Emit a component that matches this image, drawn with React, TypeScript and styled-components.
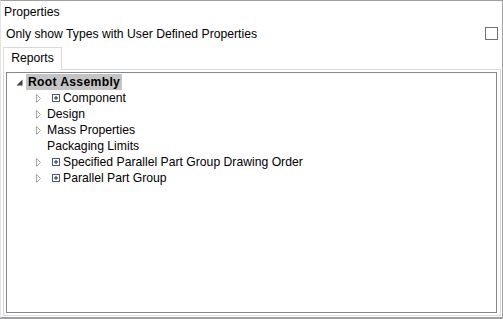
import * as React from 'react';
import styled, { createGlobalStyle } from 'styled-components';

const GlobalStyle = createGlobalStyle`
  html, body {
    margin: 0;
    padding: 0;
    background: #ffffff;
  }
  body {
    font-family: "Liberation Sans", Arial, sans-serif;
    font-size: 12.2px;
    color: #000;
  }
`;

const Frame = styled.div`
  width: 503px;
  height: 319px;
  box-sizing: border-box;
  display: flex;
  flex-direction: column;
  border-top: 1px solid #a0a0a0;
  border-left: 1px solid #e3e3e3;
  border-right: 1px solid #a0a0a0;
  border-bottom: 2px solid #a0a0a0;
  background: #fff;
`;

const Title = styled.div`
  height: 20px;
  line-height: 20px;
  padding-left: 3px;
  margin-top: 1px;
`;

const OptionRow = styled.label`
  display: flex;
  align-items: center;
  justify-content: space-between;
  height: 22px;
  padding: 1px 4px 0 5px;
  box-sizing: border-box;
`;

const CheckBox = styled.span`
  width: 13px;
  height: 13px;
  box-sizing: border-box;
  border: 1px solid #707070;
  background: #fff;
`;

const TabStrip = styled.div`
  display: flex;
  margin: 3px 0 0 2px;
  height: 22px;
`;

const Tab = styled.div<{ $active?: boolean }>`
  box-sizing: border-box;
  height: 23px;
  padding: 0 6px;
  width: 59px;
  line-height: 21px;
  text-align: center;
  border: 1px solid #d9d9d9;
  border-bottom: none;
  background: ${({ $active }) => ($active ? '#fff' : '#f0f0f0')};
  position: relative;
  z-index: 1;
`;

const TabPanel = styled.div`
  flex: 1;
  margin: 0 0 1px 2px;
  width: 498px;
  box-sizing: border-box;
  border: 1px solid #d9d9d9;
  padding: 2px 3px 2px 2px;
  display: flex;
`;

const Tree = styled.ul`
  flex: 1;
  list-style: none;
  margin: 0;
  padding: 1px 0 0;
  box-sizing: border-box;
  border: 1px solid #828790;
  background: #fff;
`;

const Row = styled.li<{ $level: number }>`
  display: flex;
  align-items: center;
  height: 16px;
  padding-left: ${({ $level }) => $level * 19}px;
`;

const Expander = styled.span`
  width: 19px;
  height: 16px;
  display: flex;
  align-items: center;
  justify-content: flex-end;
  padding-right: 3px;
  box-sizing: border-box;
`;

const Label = styled.span<{ $selected?: boolean; $bold?: boolean }>`
  display: flex;
  align-items: center;
  height: 16px;
  padding: 0 2px;
  white-space: nowrap;
  font-weight: ${({ $bold }) => ($bold ? 700 : 400)};
  letter-spacing: ${({ $bold }) => ($bold ? '0.3px' : 'normal')};
  background: ${({ $selected }) => ($selected ? '#c4c4c4' : 'transparent')};
`;

const NodeIcon = styled.svg`
  width: 8px;
  height: 8px;
  margin: 0 3px 0 5px;
  flex: none;
`;

const Expanded = () => (
  <svg width="7" height="7" viewBox="0 0 7 7">
    <polygon points="6.5,0.5 6.5,6.5 0.5,6.5" fill="#404040" />
  </svg>
);

const Collapsed = () => (
  <svg width="7" height="9" viewBox="0 0 7 9">
    <polygon points="1.5,0.5 5.5,4.5 1.5,8.5" fill="none" stroke="#a6a6a6" />
  </svg>
);

const PlusBox = () => (
  <NodeIcon viewBox="0 0 8 8">
    <rect x="0.5" y="0.5" width="7" height="7" fill="#fff" stroke="#4a5770" />
    <path d="M2 4h4M4 2v4" stroke="#1b2a4a" />
  </NodeIcon>
);

interface INode {
  name: string;
  level: number;
  expander?: 'open' | 'closed';
  icon?: boolean;
  bold?: boolean;
  selected?: boolean;
}

const nodes: INode[] = [
  { name: 'Root Assembly', level: 0, expander: 'open', bold: true, selected: true },
  { name: 'Component', level: 1, expander: 'closed', icon: true },
  { name: 'Design', level: 1, expander: 'closed' },
  { name: 'Mass Properties', level: 1, expander: 'closed' },
  { name: 'Packaging Limits', level: 1 },
  { name: 'Specified Parallel Part Group Drawing Order', level: 1, expander: 'closed', icon: true },
  { name: 'Parallel Part Group', level: 1, expander: 'closed', icon: true },
];

const App: React.FC = () => (
  <>
    <GlobalStyle />
    <Frame>
      <Title>Properties</Title>
      <OptionRow>
        <span>Only show Types with User Defined Properties</span>
        <CheckBox />
      </OptionRow>
      <TabStrip>
        <Tab $active>Reports</Tab>
      </TabStrip>
      <TabPanel>
        <Tree>
          {nodes.map(node => (
            <Row key={node.name} $level={node.level}>
              <Expander>
                {node.expander === 'open' && <Expanded />}
                {node.expander === 'closed' && <Collapsed />}
              </Expander>
              <Label $selected={node.selected} $bold={node.bold}>
                {node.icon && <PlusBox />}
                {node.name}
              </Label>
            </Row>
          ))}
        </Tree>
      </TabPanel>
    </Frame>
  </>
);

export default App;
